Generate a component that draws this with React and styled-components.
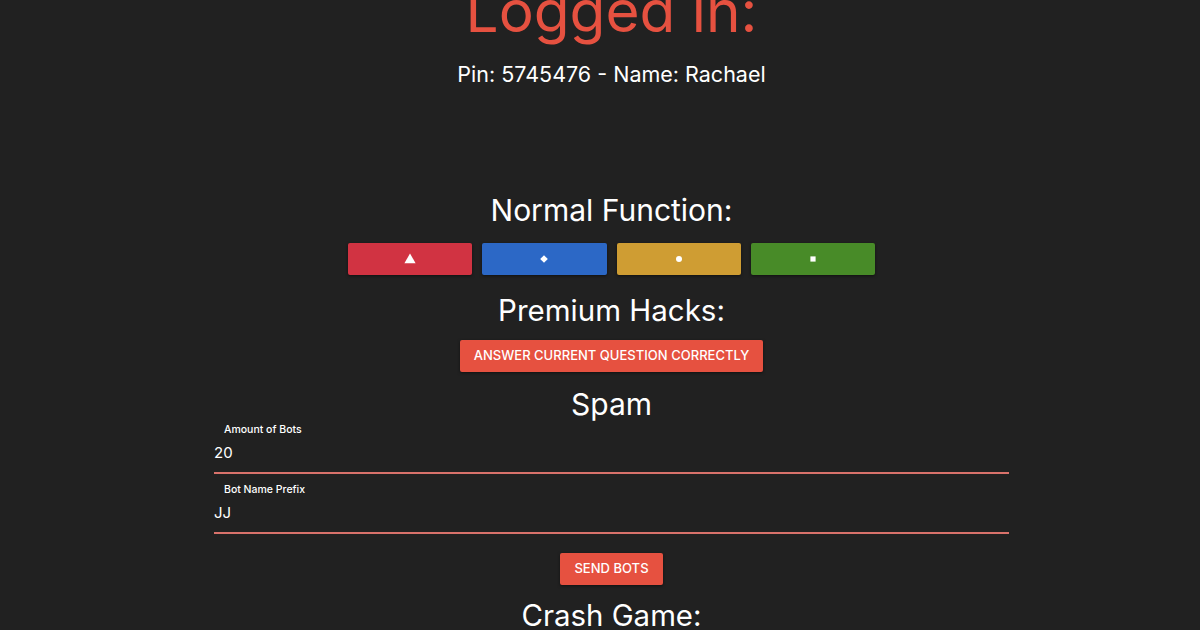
import React from "react";
import styled, { createGlobalStyle } from "styled-components";

const Global = createGlobalStyle`
  html, body { margin: 0; padding: 0; background: #212121; overflow: hidden; height: 630px; }
  #root { height: 630px; overflow: hidden; }
  * { box-sizing: border-box; }
`;

const Page = styled.main`
  width: 795px;
  margin-left: 214px;
  display: flex;
  flex-direction: column;
  align-items: center;
  color: #fff;
  font-family: Inter, "Noto Sans", sans-serif;
`;

const Title = styled.h1`
  margin: -21px 0 0;
  height: 64px;
  font-size: 58.5px;
  line-height: 64px;
  font-weight: 400;
  color: #e65140;
  white-space: nowrap;
`;

const Sub = styled.p`
  margin: 18px 0 0;
  height: 26px;
  font-size: 21.5px;
  line-height: 26px;
  font-weight: 400;
  white-space: nowrap;
`;

const Heading = styled.h2`
  margin: ${(p) => p.$top}px 0 0;
  height: 36px;
  font-size: ${(p) => p.$size || 30}px;
  line-height: 36px;
  font-weight: 400;
  white-space: nowrap;
`;

const Answers = styled.div`
  margin-top: 15px;
  display: flex;
  gap: 10px;
`;

const Answer = styled.button`
  width: 124.25px;
  height: 32px;
  border: 0;
  padding: 0;
  border-radius: 2px;
  background: ${(p) => p.$bg};
  box-shadow: 0 1px 3px rgba(0, 0, 0, 0.5);
  display: flex;
  align-items: center;
  justify-content: center;
`;

const Action = styled.button`
  margin-top: ${(p) => p.$top}px;
  height: 32px;
  padding: 0 14px 2px;
  border: 0;
  border-radius: 2px;
  background: #e65140;
  color: #fff;
  font-family: inherit;
  font-size: 13px;
  font-weight: 500;
  letter-spacing: 0.02px;
  text-transform: uppercase;
  white-space: nowrap;
  box-shadow: 0 1px 3px rgba(0, 0, 0, 0.5);
`;

const Fields = styled.div`
  width: 100%;
  display: flex;
  flex-direction: column;
  gap: 8px;
`;

const Field = styled.label`
  width: 100%;
  height: 52px;
  padding-top: 1px;
  display: flex;
  flex-direction: column;
  border-bottom: 2px solid #d9726b;
`;

const FieldLabel = styled.span`
  padding-left: 10px;
  height: 14px;
  font-size: 10.5px;
  line-height: 14px;
  font-weight: 500;
`;

const FieldValue = styled.span`
  margin-top: 6px;
  height: 20px;
  font-size: 15px;
  line-height: 20px;
`;

const shapes = {
  triangle: <polygon points="5,-0.5 10.6,9.2 -0.6,9.2" />,
  diamond: <polygon points="5,1.2 8.8,5 5,8.8 1.2,5" />,
  circle: <circle cx="5" cy="5" r="3" />,
  square: <rect x="2.4" y="2.4" width="5.2" height="5.2" />,
};

const Shape = ({ kind }) => (
  <svg width="10" height="10" viewBox="0 0 10 10" fill="#fff" aria-hidden="true" overflow="visible">
    {shapes[kind]}
  </svg>
);

export default function App() {
  return (
    <>
      <Global />
      <Page>
        <Title>Logged in:</Title>
        <Sub>Pin: 5745476 - Name: Rachael</Sub>
        <Heading $top={105}>Normal Function:</Heading>
        <Answers>
          <Answer $bg="#d13342"><Shape kind="triangle" /></Answer>
          <Answer $bg="#2c68c6"><Shape kind="diamond" /></Answer>
          <Answer $bg="#cf9d33"><Shape kind="circle" /></Answer>
          <Answer $bg="#488b28"><Shape kind="square" /></Answer>
        </Answers>
        <Heading $top={17} $size={29.5}>Premium Hacks:</Heading>
        <Action $top={12}>Answer current question correctly</Action>
        <Heading $top={14}>Spam</Heading>
        <Fields>
          <Field>
            <FieldLabel>Amount of Bots</FieldLabel>
            <FieldValue>20</FieldValue>
          </Field>
          <Field>
            <FieldLabel>Bot Name Prefix</FieldLabel>
            <FieldValue>JJ</FieldValue>
          </Field>
        </Fields>
        <Action $top={19}>Send bots</Action>
        <Heading $top={13} $size={29.4}>Crash Game:</Heading>
      </Page>
    </>
  );
}
